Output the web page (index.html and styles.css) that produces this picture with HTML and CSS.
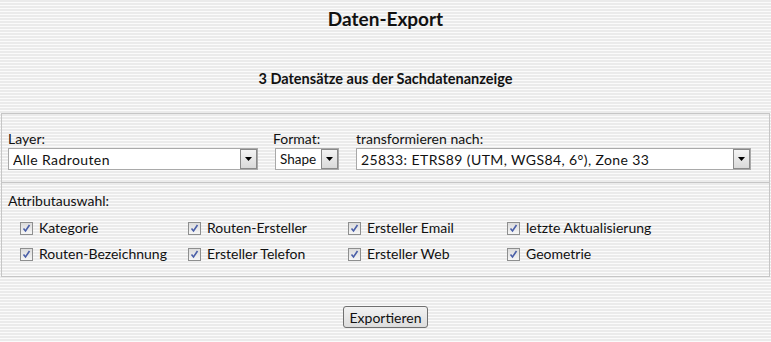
FILE: index.html
```html
<!DOCTYPE html>
<html lang="de">
<head>
    <meta charset="UTF-8" />
    <title>Daten-Export</title>
    <link rel="stylesheet" href="styles.css">
</head>
<body>
<h1 class="title">Daten-Export</h1>
<p class="subtitle">3 Datensätze aus der Sachdatenanzeige</p>

<div class="panel">
    <div class="panel-row fields">
        <div class="field">
            <label>Layer:</label>
            <div class="select"><span>Alle Radrouten</span><b class="arrow"><svg width="7" height="4" viewBox="0 0 7 4"><path d="M0 0h7L3.5 4z" fill="#000"/></svg></b></div>
        </div>
        <div class="field">
            <label class="shift">Format:</label>
            <div class="select small"><span>Shape</span><b class="arrow"><svg width="7" height="4" viewBox="0 0 7 4"><path d="M0 0h7L3.5 4z" fill="#000"/></svg></b></div>
        </div>
        <div class="field">
            <label>transformieren nach:</label>
            <div class="select"><span>25833: ETRS89 (UTM, WGS84, 6°), Zone 33</span><b class="arrow"><svg width="7" height="4" viewBox="0 0 7 4"><path d="M0 0h7L3.5 4z" fill="#000"/></svg></b></div>
        </div>
    </div>
    <div class="panel-row attrs">
        <div class="attrs-title">Attributauswahl:</div>
        <div class="attrs-grid">
            <label class="check"><i class="box"><svg width="9" height="9" viewBox="0 0 9 9"><path d="M1.5 4.5l2 2.5 4-6" fill="none" stroke="#4a5fa8" stroke-width="1.6"/></svg></i>Kategorie</label>
            <label class="check"><i class="box"><svg width="9" height="9" viewBox="0 0 9 9"><path d="M1.5 4.5l2 2.5 4-6" fill="none" stroke="#4a5fa8" stroke-width="1.6"/></svg></i>Routen-Ersteller</label>
            <label class="check"><i class="box"><svg width="9" height="9" viewBox="0 0 9 9"><path d="M1.5 4.5l2 2.5 4-6" fill="none" stroke="#4a5fa8" stroke-width="1.6"/></svg></i>Ersteller Email</label>
            <label class="check"><i class="box"><svg width="9" height="9" viewBox="0 0 9 9"><path d="M1.5 4.5l2 2.5 4-6" fill="none" stroke="#4a5fa8" stroke-width="1.6"/></svg></i>letzte Aktualisierung</label>
            <label class="check"><i class="box"><svg width="9" height="9" viewBox="0 0 9 9"><path d="M1.5 4.5l2 2.5 4-6" fill="none" stroke="#4a5fa8" stroke-width="1.6"/></svg></i>Routen-Bezeichnung</label>
            <label class="check"><i class="box"><svg width="9" height="9" viewBox="0 0 9 9"><path d="M1.5 4.5l2 2.5 4-6" fill="none" stroke="#4a5fa8" stroke-width="1.6"/></svg></i>Ersteller Telefon</label>
            <label class="check"><i class="box"><svg width="9" height="9" viewBox="0 0 9 9"><path d="M1.5 4.5l2 2.5 4-6" fill="none" stroke="#4a5fa8" stroke-width="1.6"/></svg></i>Ersteller Web</label>
            <label class="check"><i class="box"><svg width="9" height="9" viewBox="0 0 9 9"><path d="M1.5 4.5l2 2.5 4-6" fill="none" stroke="#4a5fa8" stroke-width="1.6"/></svg></i>Geometrie</label>
        </div>
    </div>
</div>

<div class="actions">
    <button class="btn">Exportieren</button>
</div>
</body>
</html>
```

FILE: styles.css
```css
body {
    margin: 0;
    font-family: Lato, "Open Sans", sans-serif;
    font-size: 14px;
    color: #111;
    background: repeating-linear-gradient(to bottom, #ebebeb 0, #ebebeb 2px, #fbfbfb 2px, #fbfbfb 3px);
    height: 342px;
    overflow: hidden;
}

.title {
    margin: 0;
    padding-top: 7px;
    font-size: 19px;
    line-height: 24px;
    font-weight: bold;
    text-align: center;
}

.subtitle {
    margin: 39px 0 0 0;
    font-size: 14.5px;
    line-height: 18px;
    font-weight: bold;
    text-align: center;
}

.panel {
    margin: 25px 1px 0 1px;
    border: 1px solid #c6c6c6;
}

.panel-row {
    padding: 0 6px;
}

.fields {
    display: grid;
    grid-template-columns: 250px 64px 395px;
    column-gap: 17px;
    padding-top: 16px;
    padding-bottom: 12px;
    border-bottom: 1px solid #c6c6c6;
}

.field label {
    display: block;
    line-height: 18px;
}

.field .shift {
    margin-left: -2px;
}

.select {
    box-sizing: border-box;
    display: flex;
    align-items: center;
    height: 22px;
    border: 1px solid #a9a9a9;
    background: #fff;
    padding-left: 4px;
    font-size: 14px;
    letter-spacing: 0.4px;
}

.select.small {
    letter-spacing: 0;
    font-size: 13.5px;
}

.select span {
    flex: 1;
    white-space: nowrap;
    overflow: hidden;
}

.arrow {
    display: flex;
    align-items: center;
    justify-content: center;
    width: 15px;
    height: 18px;
    border: 1px solid #8a8a8a;
    background: linear-gradient(#f4f4f4, #d9d9d9);
}

.attrs {
    padding-top: 9px;
    padding-bottom: 13px;
}

.attrs-title {
    line-height: 18px;
}

.attrs-grid {
    display: grid;
    grid-template-columns: 168px 160px 159px auto;
    row-gap: 8px;
    padding-left: 12px;
    margin-top: 9px;
}

.check {
    display: flex;
    align-items: center;
    line-height: 18px;
    white-space: nowrap;
}

.box {
    display: flex;
    align-items: center;
    justify-content: center;
    width: 11px;
    height: 11px;
    border: 1px solid #8e8f8f;
    background: linear-gradient(#dcdcdc, #f6f6f6);
    margin-right: 6px;
}

.actions {
    text-align: center;
    padding-top: 29px;
}

.btn {
    font-family: Lato, "Open Sans", sans-serif;
    font-size: 14px;
    color: #111;
    height: 22px;
    padding: 0 6px;
    border: 1px solid #707070;
    border-radius: 3px;
    background: linear-gradient(#f2f2f2, #dddddd);
}
```
